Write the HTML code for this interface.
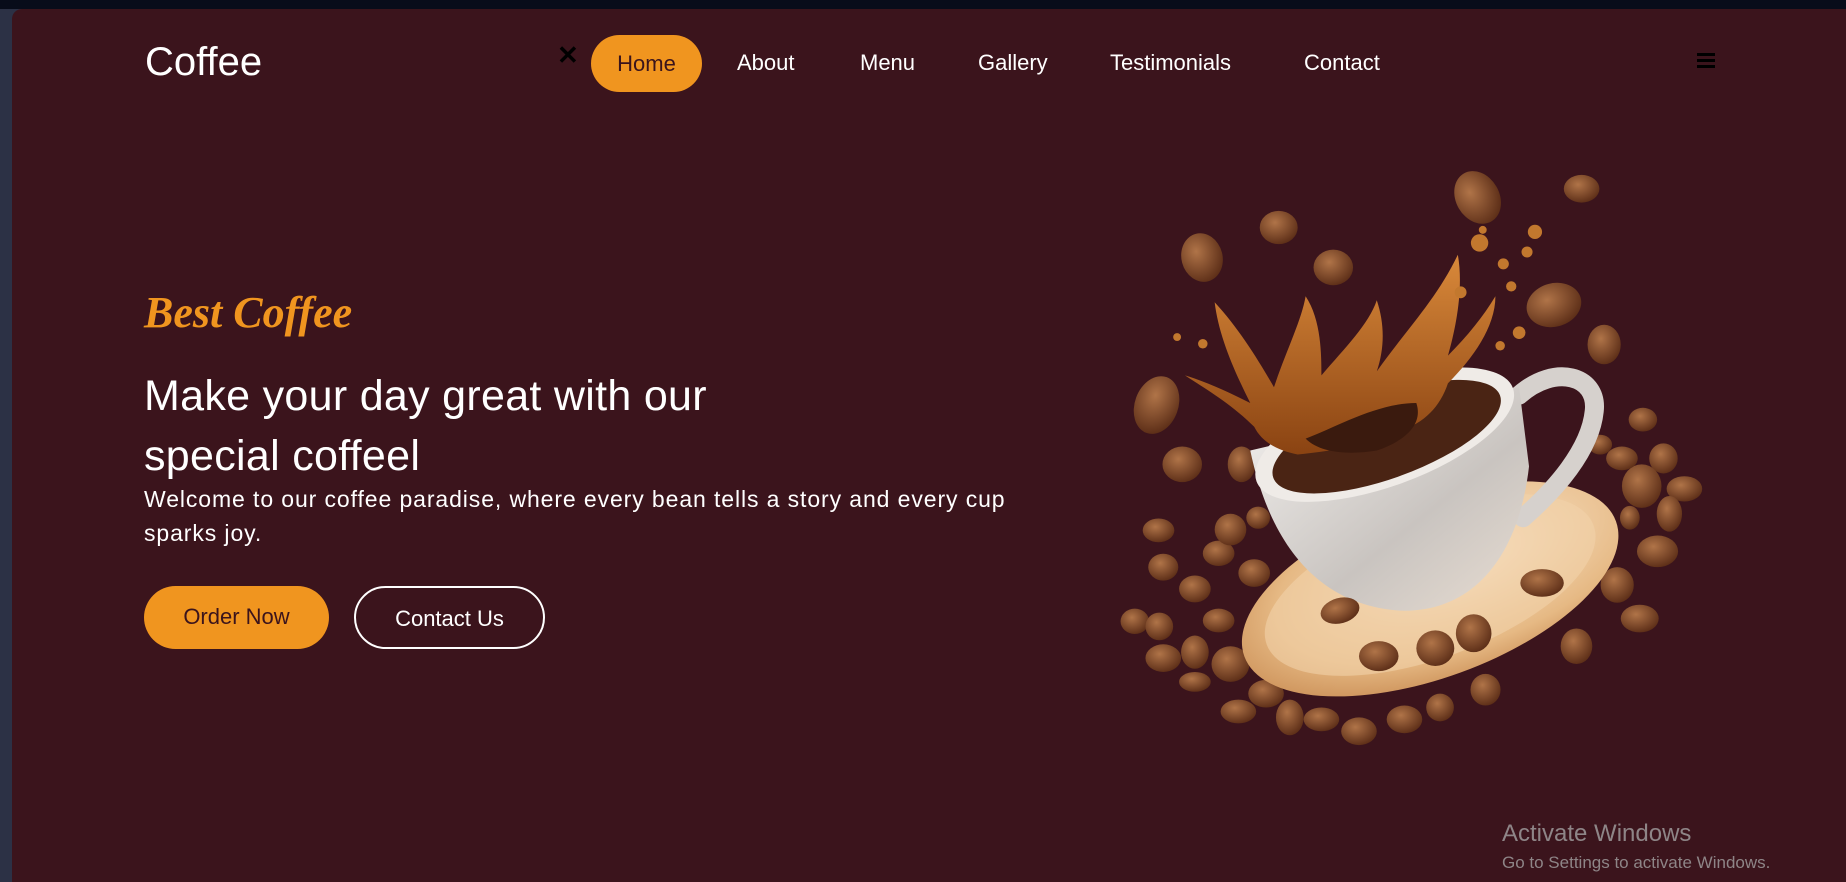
<!DOCTYPE html>
<html><head><meta charset="utf-8"><style>
*{margin:0;padding:0;box-sizing:border-box}
html,body{width:1846px;height:882px;overflow:hidden;background:#2c3145;font-family:"Liberation Sans",sans-serif}
.top{position:absolute;left:0;top:0;width:1846px;height:9px;background:#080c1a}
.panel{position:absolute;left:12px;top:9px;width:1834px;height:873px;background:#3b141c;border-top-left-radius:10px}
.abs{position:absolute;white-space:nowrap}
.logo{left:145px;top:40px;font-size:40px;color:#fff;font-weight:300}
.x{left:557px;top:40px;font-size:26px;color:#000;font-weight:bold}
.home{left:591px;top:35px;width:111px;height:57px;border-radius:29px;background:#f0951f;color:#3b141c;font-size:22px;text-align:center;line-height:57px}
.nav{top:50px;font-size:22px;color:#fff}
.ham{left:1697px;top:53px;width:18px}
.ham i{display:block;height:3px;background:#000;margin-bottom:3px}
.best{left:144px;top:287px;font-size:44px;color:#f0951f;font-weight:bold;font-style:italic;font-family:"Liberation Serif",serif}
.h1{left:144px;top:366px;font-size:43px;color:#fff;line-height:60px;letter-spacing:0.3px}
.p{left:144px;top:482px;font-size:23px;color:#fff;line-height:34px;letter-spacing:0.9px}
.btn{top:586px;height:63px;border-radius:32px;font-size:22px;text-align:center;line-height:61px}
.b1{left:144px;width:185px;background:#f0951f;color:#3b141c}
.b2{left:354px;width:191px;border:2px solid #fff;color:#fff}
.aw{left:1502px;top:820px;font-size:24px;color:#8e8587}
.aw2{left:1502px;top:853px;font-size:17px;color:#8e8587}
</style></head><body>
<div class="top"></div>
<div class="panel"></div>
<div class="abs logo">Coffee</div>
<div class="abs x">✕</div>
<div class="abs home">Home</div>
<div class="abs nav" style="left:737px">About</div>
<div class="abs nav" style="left:860px">Menu</div>
<div class="abs nav" style="left:978px">Gallery</div>
<div class="abs nav" style="left:1110px">Testimonials</div>
<div class="abs nav" style="left:1304px">Contact</div>
<div class="abs ham"><i></i><i></i><i></i></div>
<div class="abs best">Best Coffee</div>
<div class="abs h1">Make your day great with our<br>special coffeel</div>
<div class="abs p">Welcome to our coffee paradise, where every bean tells a story and every cup<br>sparks joy.</div>
<div class="abs btn b1">Order Now</div>
<div class="abs btn b2">Contact Us</div>
<svg class="abs" style="left:1100px;top:150px" width="620" height="620" viewBox="0 0 1568 1568">
<defs>
<radialGradient id="bn" cx="40%" cy="35%" r="70%"><stop offset="0" stop-color="#b07448"/><stop offset="1" stop-color="#5a2c16"/></radialGradient>
<linearGradient id="cup" x1="0" y1="0" x2="1" y2="1"><stop offset="0" stop-color="#f4f2f0"/><stop offset=".6" stop-color="#c9c4c0"/><stop offset="1" stop-color="#e8ddd2"/></linearGradient>
<radialGradient id="sau" cx="60%" cy="40%" r="70%"><stop offset="0" stop-color="#fbe8d0"/><stop offset=".7" stop-color="#e6b984"/><stop offset="1" stop-color="#c88b52"/></radialGradient>
<linearGradient id="spl" x1="0" y1="0" x2="0" y2="1"><stop offset="0" stop-color="#d9893a"/><stop offset="1" stop-color="#8a4312"/></linearGradient>
</defs>
<g fill="url(#bn)">
<ellipse cx="955" cy="120" rx="55" ry="70" transform="rotate(-30 955 120)"/>
<ellipse cx="1218" cy="98" rx="45" ry="35"/>
<ellipse cx="452" cy="196" rx="48" ry="42"/>
<ellipse cx="258" cy="272" rx="52" ry="62" transform="rotate(-15 258 272)"/>
<ellipse cx="590" cy="297" rx="50" ry="45"/>
<ellipse cx="1148" cy="392" rx="70" ry="55" transform="rotate(-15 1148 392)"/>
<ellipse cx="1275" cy="492" rx="42" ry="50"/>
<ellipse cx="143" cy="645" rx="55" ry="75" transform="rotate(20 143 645)"/>
<ellipse cx="208" cy="795" rx="50" ry="45"/>
<ellipse cx="358" cy="795" rx="35" ry="45"/>
<ellipse cx="1373" cy="682" rx="36" ry="30"/><ellipse cx="1425" cy="780" rx="36" ry="38"/>
<ellipse cx="1370" cy="850" rx="50" ry="55"/><ellipse cx="1478" cy="857" rx="45" ry="32"/>
<ellipse cx="1440" cy="920" rx="32" ry="45"/><ellipse cx="1410" cy="1015" rx="52" ry="40"/>
<ellipse cx="1308" cy="1100" rx="42" ry="45"/><ellipse cx="1365" cy="1185" rx="48" ry="35"/>
<ellipse cx="1205" cy="1255" rx="40" ry="45"/><ellipse cx="975" cy="1365" rx="38" ry="40"/>
<ellipse cx="1265" cy="745" rx="30" ry="25"/><ellipse cx="1320" cy="780" rx="40" ry="30"/><ellipse cx="1340" cy="930" rx="25" ry="30"/>
<ellipse cx="148" cy="962" rx="40" ry="30"/><ellipse cx="88" cy="1192" rx="36" ry="32"/>
<ellipse cx="160" cy="1055" rx="38" ry="34"/><ellipse cx="240" cy="1110" rx="40" ry="34"/>
<ellipse cx="300" cy="1020" rx="40" ry="32"/><ellipse cx="330" cy="960" rx="40" ry="40"/>
<ellipse cx="150" cy="1205" rx="35" ry="35"/><ellipse cx="160" cy="1285" rx="45" ry="35"/>
<ellipse cx="240" cy="1270" rx="35" ry="42"/><ellipse cx="330" cy="1300" rx="48" ry="45"/>
<ellipse cx="240" cy="1345" rx="40" ry="25"/><ellipse cx="300" cy="1190" rx="40" ry="30"/>
<ellipse cx="420" cy="1375" rx="45" ry="35"/><ellipse cx="350" cy="1420" rx="45" ry="30"/>
<ellipse cx="480" cy="1435" rx="35" ry="45"/><ellipse cx="560" cy="1440" rx="45" ry="30"/>
<ellipse cx="655" cy="1470" rx="45" ry="35"/><ellipse cx="770" cy="1440" rx="45" ry="35"/>
<ellipse cx="860" cy="1410" rx="35" ry="35"/><ellipse cx="390" cy="1070" rx="40" ry="35"/>
<ellipse cx="400" cy="930" rx="30" ry="28"/>
</g>
<ellipse cx="835" cy="1110" rx="500" ry="225" transform="rotate(-20 835 1110)" fill="url(#sau)"/>
<ellipse cx="835" cy="1100" rx="440" ry="185" transform="rotate(-20 835 1100)" fill="#f2d2aa" opacity=".6"/>
<path d="M1060 620 C1150 540 1260 570 1250 660 C1240 760 1150 860 1070 930" fill="none" stroke="#d6d1cd" stroke-width="48" stroke-linecap="round"/>
<path d="M380 760 C420 950 520 1150 760 1165 C950 1170 1060 1020 1085 800 L1060 600 Z" fill="url(#cup)"/>
<ellipse cx="720" cy="720" rx="345" ry="130" transform="rotate(-20 720 720)" fill="#efebe7"/>
<ellipse cx="725" cy="725" rx="305" ry="105" transform="rotate(-20 725 725)" fill="#4a2414"/>
<path d="M390 700 C330 640 260 600 215 570 C280 590 340 620 380 640 C340 560 300 470 290 385 C350 450 400 530 440 600 C470 510 510 430 520 370 C560 430 560 520 560 570 C620 500 680 440 700 380 C720 440 720 500 700 560 C770 460 850 380 905 265 C920 350 900 450 880 520 C930 470 970 420 1000 370 C1000 450 940 530 880 590 C860 650 820 690 760 710 C700 740 600 760 500 770 C450 760 410 740 390 700 Z" fill="url(#spl)"/>
<path d="M520 730 C600 700 700 640 800 640 C820 700 760 740 700 760 C640 770 560 770 520 730 Z" fill="#3a1a0e"/>
<g fill="url(#bn)">
<ellipse cx="607" cy="1165" rx="50" ry="32" transform="rotate(-15 607 1165)"/>
<ellipse cx="1118" cy="1095" rx="55" ry="35"/>
<ellipse cx="705" cy="1280" rx="50" ry="38"/>
<ellipse cx="848" cy="1260" rx="48" ry="45"/>
<ellipse cx="945" cy="1222" rx="45" ry="48"/>
</g>
<g fill="#c2782e">
<circle cx="960" cy="235" r="22"/><circle cx="1100" cy="207" r="18"/><circle cx="1080" cy="258" r="14"/>
<circle cx="1020" cy="288" r="14"/><circle cx="1040" cy="345" r="13"/><circle cx="912" cy="360" r="15"/>
<circle cx="1060" cy="462" r="16"/><circle cx="1012" cy="495" r="12"/><circle cx="260" cy="490" r="12"/>
<circle cx="195" cy="473" r="10"/><circle cx="968" cy="202" r="10"/>
</g>
</svg>
<div class="abs aw">Activate Windows</div>
<div class="abs aw2">Go to Settings to activate Windows.</div>
</body></html>
